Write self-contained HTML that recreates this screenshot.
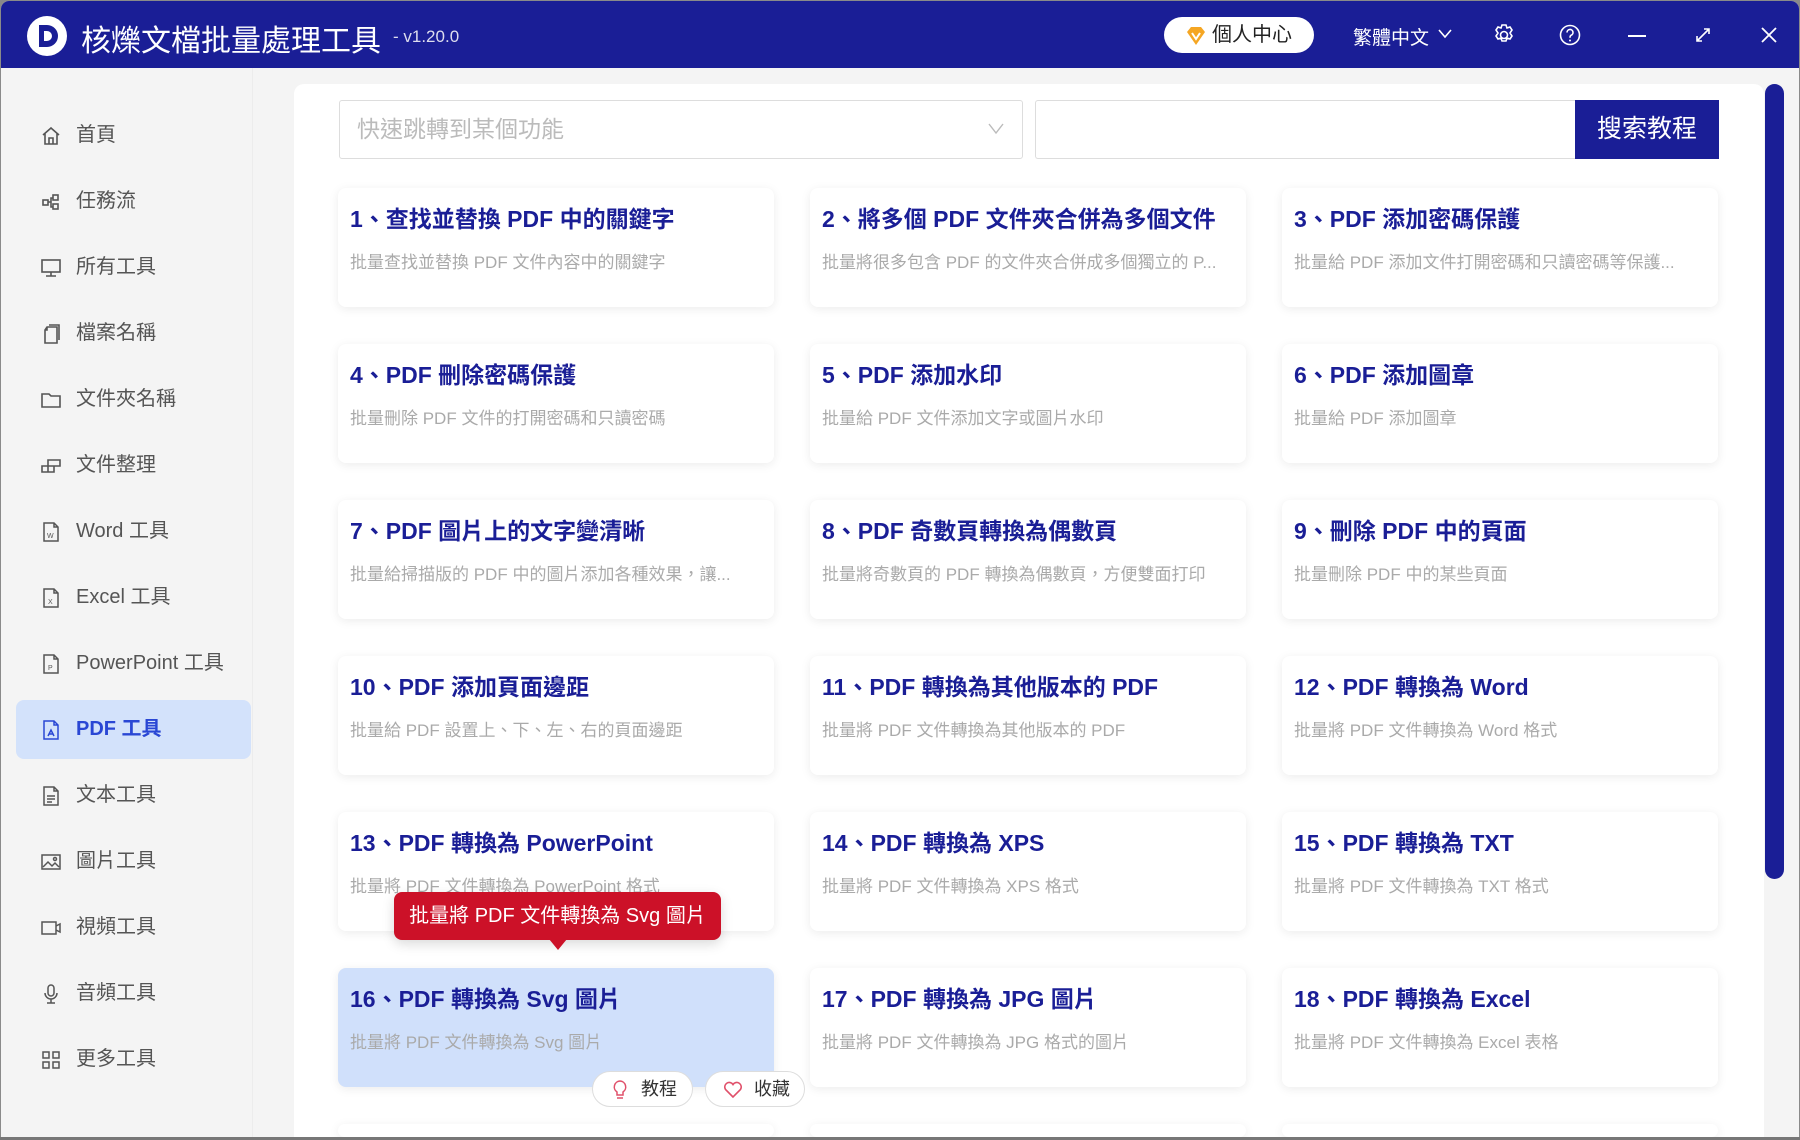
<!DOCTYPE html>
<html><head><meta charset="utf-8"><style>
*{margin:0;padding:0;box-sizing:border-box}
html,body{width:1800px;height:1140px;overflow:hidden}
body{background:#8a8a8a;font-family:"Liberation Sans","Noto Sans CJK TC",sans-serif;position:relative}
.win{position:absolute;left:1px;top:1px;width:1798px;height:1136px;background:#f4f4f4;border-radius:8px 8px 0 0;overflow:hidden}
.hdr{position:absolute;left:0;top:0;width:100%;height:67px;background:#1a1e96;color:#fff}
.abs{position:absolute}
.side{position:absolute;left:0;top:67px;width:252px;bottom:0;border-right:1px solid #ececec}
.si{position:absolute;left:15px;width:235px;height:59px;border-radius:8px;font-size:20px;color:#555;line-height:59px;padding-left:60px}
.si svg{position:absolute;left:24px;top:19px}
.si.act{background:#d3e2fb;color:#2a47d4;font-weight:bold}
.main{position:absolute;left:293px;top:83px;width:1470px;height:1053px;background:#fff;border-radius:10px 10px 0 0}
.card{position:absolute;width:436px;height:119px;background:#fff;border-radius:8px;box-shadow:0 2px 10px rgba(0,0,0,.08);overflow:hidden}
.card h3{position:absolute;left:12px;top:12px;font-size:23px;color:#1a1e96;font-weight:bold;white-space:nowrap}
.card p{position:absolute;left:12px;top:60px;font-size:17px;color:#aaa;white-space:nowrap}
.pill{position:absolute;height:36px;background:#fff;border:1px solid #ddd;border-radius:18px;font-size:18px;color:#333;line-height:34px}
</style></head><body>
<div class="win">
<div class="hdr">
 <svg class="abs" style="left:24px;top:13px" width="44" height="44" viewBox="0 0 44 44"><circle cx="22" cy="22" r="20" fill="#fff"/><path d="M14 11h8a11 11 0 0 1 0 22h-8z" fill="#1a1e96"/><path d="M19 17h3a5 5 0 0 1 0 10h-3z" fill="#fff"/></svg>
 <div class="abs" style="left:80px;top:15px;font-size:30px">核爍文檔批量處理工具</div>
 <div class="abs" style="left:392px;top:26px;font-size:17px;color:#dde">- v1.20.0</div>
 <div class="abs" style="left:1163px;top:16px;width:150px;height:36px;background:#fff;border-radius:18px;color:#222;font-size:20px;line-height:36px;padding-left:48px">個人中心
  <svg class="abs" style="left:22px;top:10px" width="20" height="18" viewBox="0 0 20 18"><path d="M1 5 5 0h10l4 5-9 13z" fill="#f5a623"/><path d="M6 6l4 6 4-6" stroke="#fff" stroke-width="2" fill="none"/></svg></div>
 <div class="abs" style="left:1352px;top:22px;font-size:19px">繁體中文</div>
 <svg class="abs" style="left:1437px;top:28px" width="14" height="10"><path d="M1 1l6 7 6-7" stroke="#fff" stroke-width="1.6" fill="none"/></svg>
 <svg class="abs" style="left:1492px;top:23px" width="22" height="22" viewBox="0 0 22 22"><circle cx="11" cy="11" r="3.5" stroke="#fff" stroke-width="1.6" fill="none"/><path d="M9 1h4l1 3 3-1 2 3-2 3 2 3-2 3-3-1-1 3H9l-1-3-3 1-2-3 2-3-2-3 2-3 3 1z" stroke="#fff" stroke-width="1.6" fill="none"/></svg>
 <svg class="abs" style="left:1558px;top:23px" width="22" height="22" viewBox="0 0 22 22"><circle cx="11" cy="11" r="9.5" stroke="#fff" stroke-width="1.6" fill="none"/><path d="M8 8.5a3 3 0 1 1 4 2.8c-1 .5-1 1.2-1 2.5" stroke="#fff" stroke-width="1.6" fill="none"/><circle cx="11" cy="16.5" r="1" fill="#fff"/></svg>
 <div class="abs" style="left:1627px;top:34px;width:18px;height:2px;background:#fff"></div>
 <svg class="abs" style="left:1693px;top:25px" width="18" height="18"><path d="M3 15 15 3M10 3h5v5M3 10v5h5" stroke="#fff" stroke-width="1.6" fill="none"/></svg>
 <svg class="abs" style="left:1759px;top:25px" width="18" height="18"><path d="M2 2l14 14M16 2 2 16" stroke="#fff" stroke-width="1.8"/></svg>
</div>
<div class="side">
 <div class="si" style="top:38px"><svg width="22" height="22" viewBox="0 0 22 22" fill="none" stroke="#555" stroke-width="1.6"><path d="M3 10 11 3l8 7M5 8v11h12V8M9 19v-6h4v6"/></svg>首頁</div>
 <div class="si" style="top:104px"><svg width="22" height="22" viewBox="0 0 22 22" fill="none" stroke="#555" stroke-width="1.6"><rect x="3" y="9" width="5" height="5"/><rect x="13" y="4" width="5" height="5"/><rect x="13" y="13" width="5" height="5"/><path d="M8 11h3v-4h2M11 11v5h2"/></svg>任務流</div>
 <div class="si" style="top:170px"><svg width="22" height="22" viewBox="0 0 22 22" fill="none" stroke="#555" stroke-width="1.6"><rect x="2" y="3" width="18" height="12"/><path d="M11 15v4M6 19h10"/></svg>所有工具</div>
 <div class="si" style="top:236px"><svg width="22" height="22" viewBox="0 0 22 22" fill="none" stroke="#555" stroke-width="1.6"><path d="M7 4h10v16H5V7zM7 4v3H5M9 2h10v15"/></svg>檔案名稱</div>
 <div class="si" style="top:302px"><svg width="22" height="22" viewBox="0 0 22 22" fill="none" stroke="#555" stroke-width="1.6"><path d="M2 5h7l2 2h9v11H2z"/></svg>文件夾名稱</div>
 <div class="si" style="top:368px"><svg width="22" height="22" viewBox="0 0 22 22" fill="none" stroke="#555" stroke-width="1.6"><path d="M2 11h12v6H2zM8 11v6M8 11V5h12v6h-6"/></svg>文件整理</div>
 <div class="si" style="top:434px"><svg width="22" height="22" viewBox="0 0 22 22" fill="none" stroke="#555" stroke-width="1.5"><path d="M4 2h10l4 4v14H4zM14 2v4h4"/><text x="7" y="17" font-size="7" fill="#555" stroke="none">W</text></svg>Word 工具</div>
 <div class="si" style="top:500px"><svg width="22" height="22" viewBox="0 0 22 22" fill="none" stroke="#555" stroke-width="1.5"><path d="M4 2h10l4 4v14H4zM14 2v4h4"/><text x="8" y="17" font-size="7" fill="#555" stroke="none">X</text></svg>Excel 工具</div>
 <div class="si" style="top:566px"><svg width="22" height="22" viewBox="0 0 22 22" fill="none" stroke="#555" stroke-width="1.5"><path d="M4 2h10l4 4v14H4zM14 2v4h4"/><text x="8" y="17" font-size="7" fill="#555" stroke="none">P</text></svg>PowerPoint 工具</div>
 <div class="si act" style="top:632px"><svg width="22" height="22" viewBox="0 0 22 22" fill="none" stroke="#2a47d4" stroke-width="1.5"><path d="M4 2h10l4 4v14H4zM14 2v4h4M8 17l3-6 3 6M9 15h4"/></svg>PDF 工具</div>
 <div class="si" style="top:698px"><svg width="22" height="22" viewBox="0 0 22 22" fill="none" stroke="#555" stroke-width="1.5"><path d="M4 2h10l4 4v14H4zM14 2v4h4M7 11h8M7 14h8M7 17h5"/></svg>文本工具</div>
 <div class="si" style="top:764px"><svg width="22" height="22" viewBox="0 0 22 22" fill="none" stroke="#555" stroke-width="1.5"><rect x="2" y="4" width="18" height="14"/><path d="M3 16l5-5 4 4 3-3 4 4"/><circle cx="15" cy="8" r="1.5"/></svg>圖片工具</div>
 <div class="si" style="top:830px"><svg width="22" height="22" viewBox="0 0 22 22" fill="none" stroke="#555" stroke-width="1.5"><rect x="2" y="5" width="14" height="12"/><path d="M16 9l4-2v8l-4-2"/></svg>視頻工具</div>
 <div class="si" style="top:896px"><svg width="22" height="22" viewBox="0 0 22 22" fill="none" stroke="#555" stroke-width="1.5"><rect x="8" y="2" width="6" height="11" rx="3"/><path d="M5 10a6 6 0 0 0 12 0M11 16v4M7 20h8"/></svg>音頻工具</div>
 <div class="si" style="top:962px"><svg width="22" height="22" viewBox="0 0 22 22" fill="none" stroke="#555" stroke-width="1.5"><rect x="3" y="3" width="6" height="6"/><rect x="13" y="3" width="6" height="6"/><rect x="3" y="13" width="6" height="6"/><rect x="13" y="13" width="6" height="6"/></svg>更多工具</div>
</div>
<div class="main">
 <div class="abs" style="left:45px;top:16px;width:684px;height:59px;border:1px solid #ddd;border-radius:3px;font-size:23px;color:#bbb;line-height:57px;padding-left:17px">快速跳轉到某個功能
  <svg class="abs" style="left:648px;top:22px" width="16" height="12"><path d="M1 1l7 9 7-9" stroke="#bbb" stroke-width="1.4" fill="none"/></svg></div>
 <div class="abs" style="left:741px;top:16px;width:541px;height:59px;border:1px solid #ddd;border-right:none;border-radius:3px 0 0 3px"></div>
 <div class="abs" style="left:1281px;top:16px;width:144px;height:59px;background:#1a1e96;color:#fff;font-size:25px;line-height:59px;text-align:center">搜索教程</div>
</div>
<div class="abs" style="left:1764px;top:83px;width:19px;height:795px;background:#1a1e96;border-radius:10px"></div>
<div id="cards"></div>
<div class="abs" style="left:393px;top:891px;width:327px;height:48px;background:#cc1128;border-radius:8px;color:#fff;font-size:20px;line-height:48px;text-align:center;box-shadow:0 4px 12px rgba(0,0,0,.15)">批量將 PDF 文件轉換為 Svg 圖片</div>
<div class="abs" style="left:548px;top:938px;width:0;height:0;border-left:9px solid transparent;border-right:9px solid transparent;border-top:11px solid #cc1128"></div>
<div class="pill" style="left:591px;top:1070px;width:101px;padding-left:48px"><svg class="abs" style="left:20px;top:8px" width="14" height="20" viewBox="0 0 14 20" fill="none" stroke="#e0506a" stroke-width="1.5"><path d="M7 1a6 6 0 0 0-3 11v3h6v-3A6 6 0 0 0 7 1zM4 18h6"/></svg>教程</div>
<div class="pill" style="left:704px;top:1070px;width:100px;padding-left:48px"><svg class="abs" style="left:17px;top:9px" width="20" height="18" viewBox="0 0 20 18" fill="none" stroke="#e0506a" stroke-width="1.6"><path d="M10 16 2.5 8.5a4.3 4.3 0 0 1 7.5-5 4.3 4.3 0 0 1 7.5 5z"/></svg>收藏</div>
</div>
<div class="abs" style="left:0;top:1137px;width:1800px;height:3px;background:#777"></div>
<script>
var d=[["1、查找並替換 PDF 中的關鍵字","批量查找並替換 PDF 文件內容中的關鍵字"],["2、將多個 PDF 文件夾合併為多個文件","批量將很多包含 PDF 的文件夾合併成多個獨立的 P..."],["3、PDF 添加密碼保護","批量給 PDF 添加文件打開密碼和只讀密碼等保護..."],
["4、PDF 刪除密碼保護","批量刪除 PDF 文件的打開密碼和只讀密碼"],["5、PDF 添加水印","批量給 PDF 文件添加文字或圖片水印"],["6、PDF 添加圖章","批量給 PDF 添加圖章"],
["7、PDF 圖片上的文字變清晰","批量給掃描版的 PDF 中的圖片添加各種效果，讓..."],["8、PDF 奇數頁轉換為偶數頁","批量將奇數頁的 PDF 轉換為偶數頁，方便雙面打印"],["9、刪除 PDF 中的頁面","批量刪除 PDF 中的某些頁面"],
["10、PDF 添加頁面邊距","批量給 PDF 設置上、下、左、右的頁面邊距"],["11、PDF 轉換為其他版本的 PDF","批量將 PDF 文件轉換為其他版本的 PDF"],["12、PDF 轉換為 Word","批量將 PDF 文件轉換為 Word 格式"],
["13、PDF 轉換為 PowerPoint","批量將 PDF 文件轉換為 PowerPoint 格式"],["14、PDF 轉換為 XPS","批量將 PDF 文件轉換為 XPS 格式"],["15、PDF 轉換為 TXT","批量將 PDF 文件轉換為 TXT 格式"],
["16、PDF 轉換為 Svg 圖片","批量將 PDF 文件轉換為 Svg 圖片"],["17、PDF 轉換為 JPG 圖片","批量將 PDF 文件轉換為 JPG 格式的圖片"],["18、PDF 轉換為 Excel","批量將 PDF 文件轉換為 Excel 表格"],["",""],["",""],["",""]];
var xs=[338,810,1282],h="";
d.forEach(function(c,i){var x=xs[i%3]-1,y=188+Math.floor(i/3)*156-1;
h+='<div class="card" style="left:'+x+'px;top:'+y+'px;'+(i==15?'background:#d0e0fb;':'')+(i>17?'height:13px;':'')+'"><h3>'+c[0]+'</h3><p>'+c[1]+'</p></div>';});
document.getElementById('cards').outerHTML=h;
</script>
</body></html>
